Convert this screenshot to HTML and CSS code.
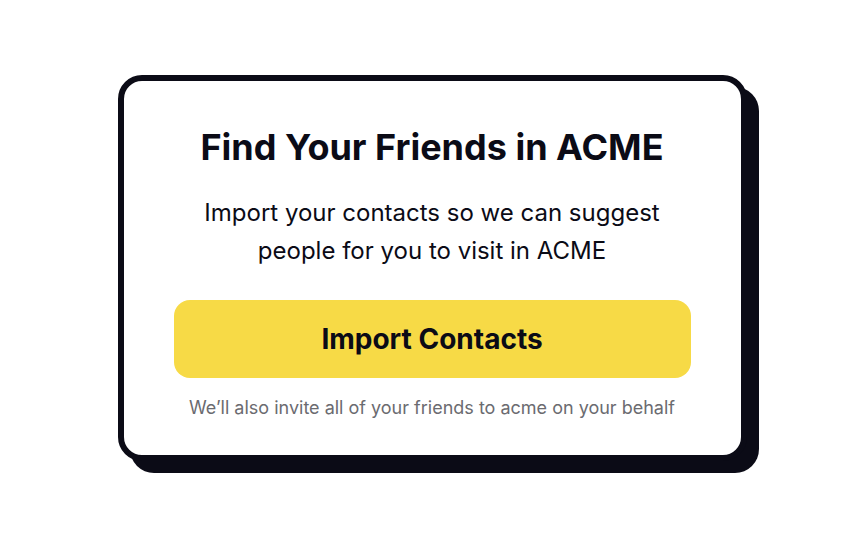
FILE: index.html
```html
<!DOCTYPE html>
<html lang="en">
<head>
<meta charset="utf-8">
<title>Find Your Friends</title>
<link rel="stylesheet" href="styles.css">
</head>
<body>
<main class="stage">
  <section class="card">
    <h1 class="title">Find Your Friends in ACME</h1>
    <p class="lead">Import your contacts so we can suggest<br>people for you to visit in ACME</p>
    <button class="cta" type="button">Import Contacts</button>
    <p class="note">We’ll also invite all of your friends to acme on your behalf</p>
  </section>
</main>
</body>
</html>
```
FILE: styles.css
```css
* { box-sizing: border-box; }
html, body { margin: 0; padding: 0; background: #ffffff; }
body {
  font-family: Inter, "Noto Sans", "Liberation Sans", sans-serif;
  color: #0b0b16;
}
.stage {
  width: 864px;
  height: 540px;
  display: flex;
  justify-content: center;
  align-items: flex-start;
  padding-top: 75px;
}
.card {
  width: 629px;
  height: 386px;
  border: 6px solid #0b0b16;
  border-radius: 24px;
  background: #fff;
  box-shadow: 12px 12px 0 #0b0b16;
  display: flex;
  flex-direction: column;
  align-items: center;
  padding: 44px 48px 0;
}
.title {
  margin: 0;
  font-size: 36px;
  line-height: 44px;
  font-weight: 700;
}
.lead {
  margin: 25px 0 0;
  font-size: 24px;
  line-height: 38px;
  font-weight: 400;
  text-align: center;
}
.cta {
  margin-top: 30px;
  flex: none;
  width: 517px;
  height: 78px;
  border: 0;
  border-radius: 16px;
  background: #f7da46;
  color: #0b0b16;
  font-family: inherit;
  font-size: 28px;
  font-weight: 700;
}
.note {
  margin: 18px 0 0;
  font-size: 18px;
  line-height: 24px;
  color: #6b6b70;
}
```
